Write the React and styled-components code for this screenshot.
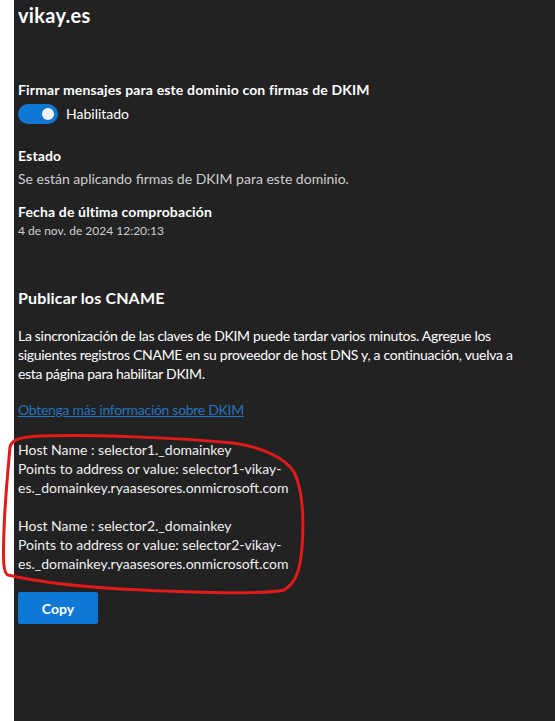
import React from "react";
import styled, { createGlobalStyle } from "styled-components";

const Global = createGlobalStyle`
  html, body { margin: 0; padding: 0; background: #ffffff; }
  body { font-family: "Segoe UI", Lato, "Open Sans", sans-serif; }
  * { box-sizing: border-box; }
`;

const Page = styled.div`
  display: flex;
  min-height: 100vh;
  padding-left: 14px;
`;

const Panel = styled.main`
  flex: 1;
  background: #222222;
  color: #ffffff;
  padding: 1px 20px 40px 4px;
  display: flex;
  flex-direction: column;
  align-items: flex-start;
`;

const Title = styled.h1`
  margin: 0;
  font-size: 20px;
  line-height: 28px;
  font-weight: 700;
  letter-spacing: 0.3px;
  color: #ffffff;
`;

const Label = styled.div`
  margin-top: ${(p) => p.$mt || 0}px;
  font-size: 14px;
  line-height: 20px;
  font-weight: 700;
  letter-spacing: 0.15px;
  color: #ffffff;
`;

const Value = styled.div`
  margin-top: ${(p) => p.$mt || 0}px;
  font-size: ${(p) => p.$size || 14}px;
  line-height: ${(p) => (p.$size === 12 ? 16 : 20)}px;
  color: #cfcfcf;
`;

const ToggleRow = styled.div`
  margin-top: 4px;
  display: flex;
  align-items: center;
  gap: 8px;
  font-size: 14px;
  line-height: 20px;
  color: #ffffff;
`;

const Track = styled.span`
  width: 40px;
  height: 20px;
  border-radius: 10px;
  background: #0f78d4;
  display: flex;
  align-items: center;
  justify-content: ${(p) => (p.$on ? "flex-end" : "flex-start")};
  padding: 0 4px;
`;

const Knob = styled.span`
  width: 12px;
  height: 12px;
  border-radius: 50%;
  background: #f4f4f4;
`;

const Section = styled.h2`
  margin: 48px 0 0;
  font-size: 16px;
  line-height: 22px;
  font-weight: 700;
  letter-spacing: 0.15px;
  color: #ffffff;
`;

const Paragraph = styled.p`
  margin: 17px 0 0;
  max-width: 520px;
  font-size: 14px;
  line-height: 19px;
  letter-spacing: -0.3px;
  color: #ffffff;
`;

const Link = styled.a`
  margin-top: 17px;
  font-size: 14px;
  line-height: 19px;
  letter-spacing: -0.3px;
  color: #2474bd;
  text-decoration: underline;
`;

const HostWrap = styled.div`
  position: relative;
  margin-top: 21px;
`;

const HostText = styled.div`
  width: 292px;
  font-size: 14px;
  line-height: 19px;
  color: #f0f0f0;
  white-space: pre-wrap;
`;

const Scribble = styled.svg`
  position: absolute;
  left: -18px;
  top: -440px;
  pointer-events: none;
  overflow: visible;
`;

const CopyButton = styled.button`
  margin-top: 19px;
  width: 80px;
  height: 32px;
  border: none;
  border-radius: 2px;
  background: #0f78d4;
  color: #ffffff;
  font-family: inherit;
  font-size: 14px;
  font-weight: 700;
  cursor: pointer;
`;

const hostContent =
  "Host Name : selector1._domainkey\nPoints to address or value: selector1-vikay-es._domainkey.ryaasesores.onmicrosoft.com\n\nHost Name : selector2._domainkey\nPoints to address or value: selector2-vikay-es._domainkey.ryaasesores.onmicrosoft.com";

export default function App() {
  return (
    <>
      <Global />
      <Page>
        <Panel>
          <Title>vikay.es</Title>
          <Label $mt={51}>Firmar mensajes para este dominio con firmas de DKIM</Label>
          <ToggleRow>
            <Track $on>
              <Knob />
            </Track>
            Habilitado
          </ToggleRow>
          <Label $mt={22}>Estado</Label>
          <Value $mt={3}>Se están aplicando firmas de DKIM para este dominio.</Value>
          <Label $mt={13}>Fecha de última comprobación</Label>
          <Value $mt={1} $size={12}>4 de nov. de 2024 12:20:13</Value>
          <Section>Publicar los CNAME</Section>
          <Paragraph>
            La sincronización de las claves de DKIM puede tardar varios minutos. Agregue los
            siguientes registros CNAME en su proveedor de host DNS y, a continuación, vuelva a
            esta página para habilitar DKIM.
          </Paragraph>
          <Link href="#">Obtenga más información sobre DKIM</Link>
          <HostWrap>
            <HostText>{hostContent}</HostText>
            <Scribble width="320" height="600">
              <path
                d="M10 447 C 12 440, 18 437, 40 436 C 90 434, 180 438, 233 443 C 262 447, 285 458, 294 472 C 303 490, 304 520, 302 548 C 300 570, 296 583, 284 590 C 262 595, 180 592, 120 589 C 70 586, 30 580, 8 575 C 3 573, 3 560, 4 530 C 5 500, 8 470, 10 447"
                fill="none"
                stroke="#e11b1b"
                strokeWidth="3"
                strokeLinecap="round"
              />
            </Scribble>
          </HostWrap>
          <CopyButton>Copy</CopyButton>
        </Panel>
      </Page>
    </>
  );
}
